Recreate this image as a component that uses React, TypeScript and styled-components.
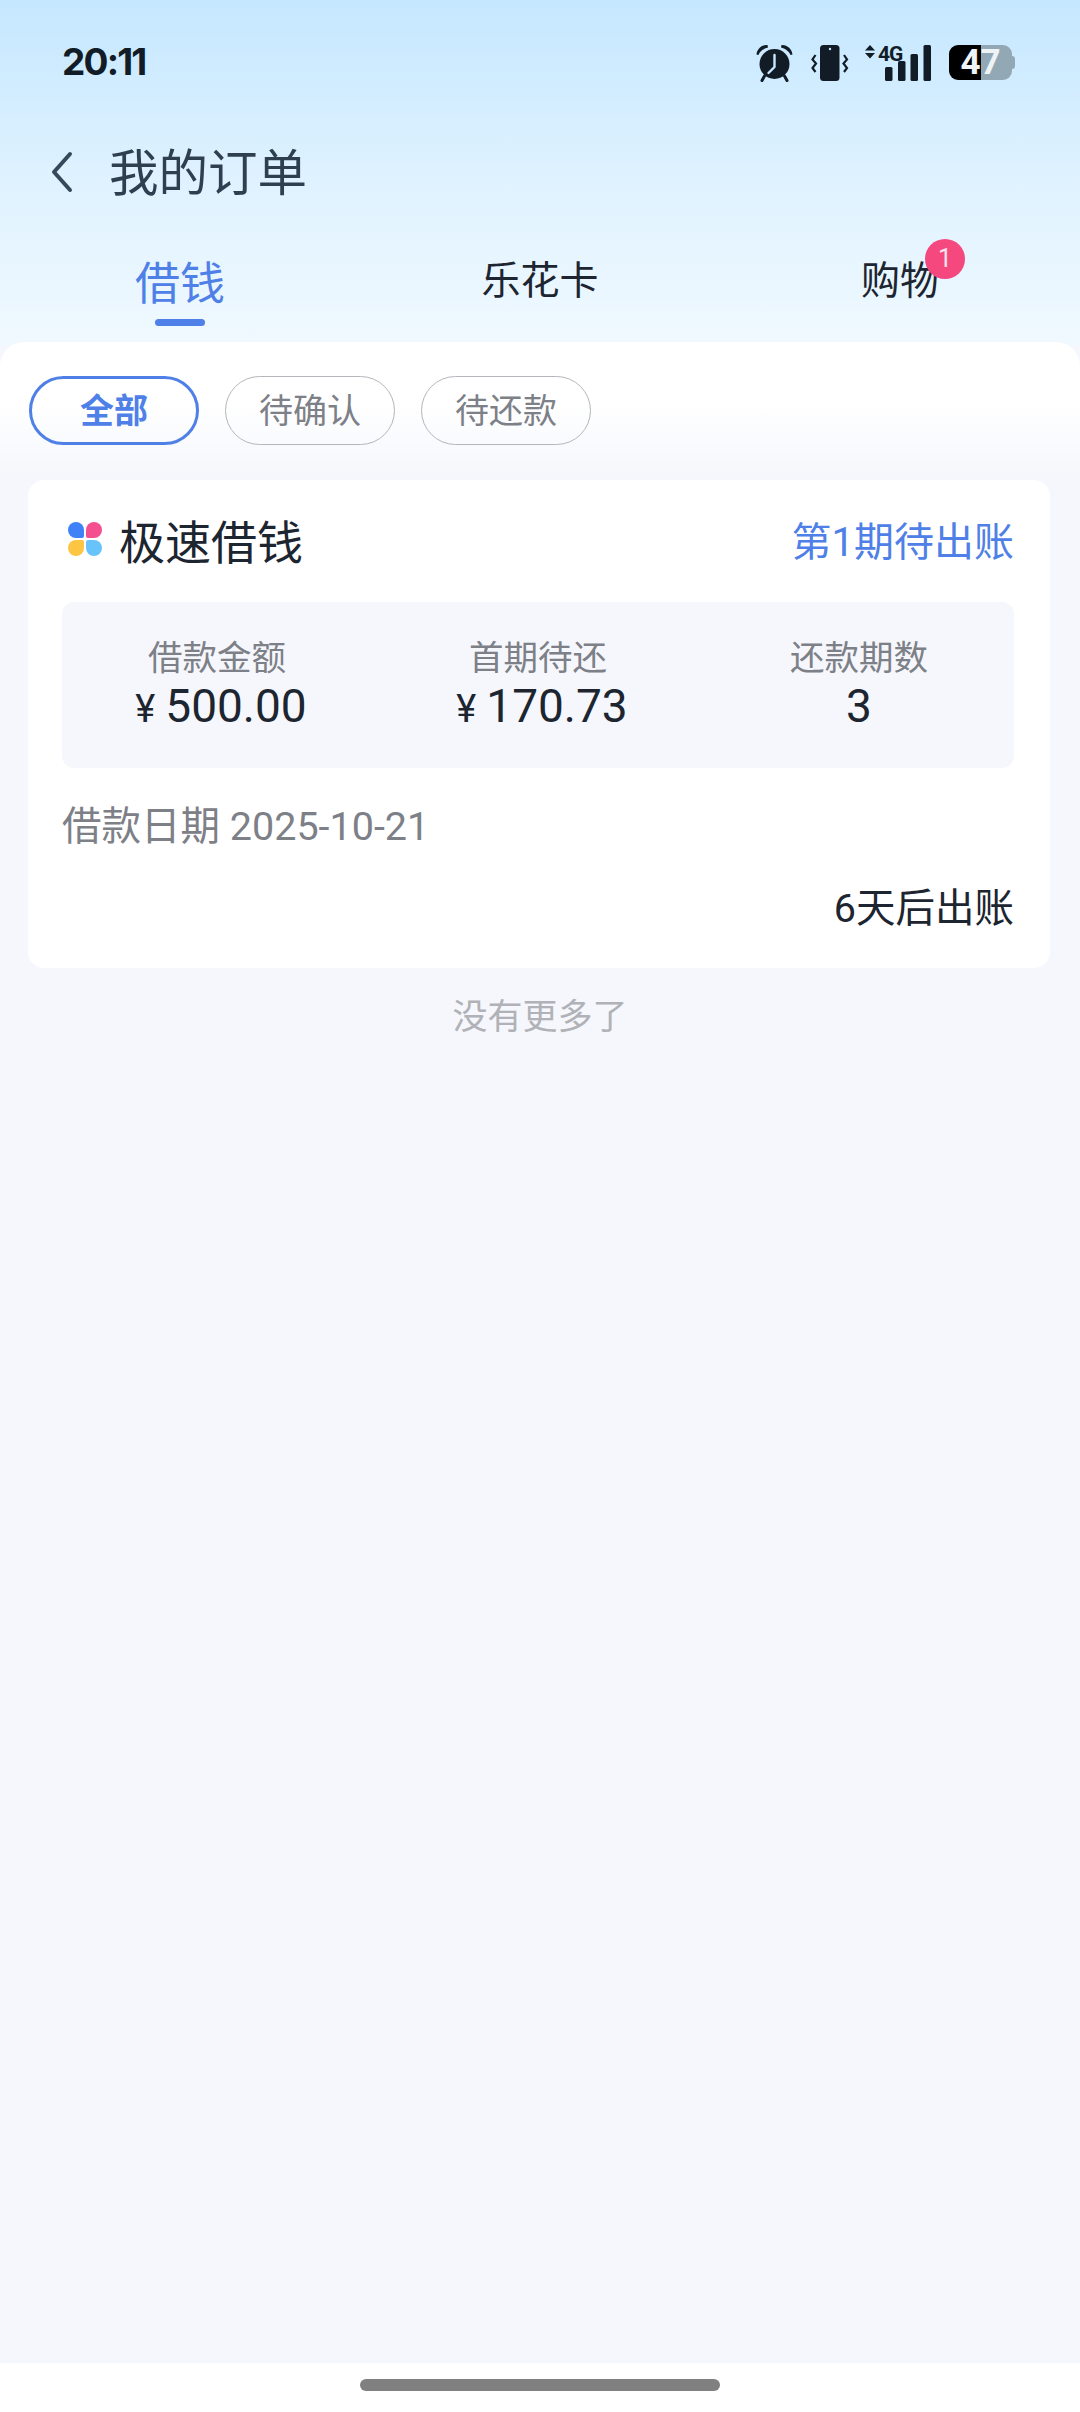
import React from 'react'
import styled, { createGlobalStyle } from 'styled-components'

const GlobalStyle = createGlobalStyle`
  html, body {
    margin: 0;
    padding: 0;
    background: #f5f7fc;
  }
  * {
    box-sizing: border-box;
  }
`

const FONT = `Roboto, "Noto Sans CJK SC", sans-serif`

const Page = styled.div`
  width: 1080px;
  height: 2412px;
  display: flex;
  flex-direction: column;
  overflow: hidden;
  font-family: ${FONT};
  background: linear-gradient(180deg, #c5e7ff 0, #dff2ff 180px, #f0f9ff 345px, #f5f7fc 346px);
`

const StatusBar = styled.div`
  height: 122px;
  display: flex;
  align-items: center;
  justify-content: space-between;
  padding: 0 68px 0 62px;
`

const Time = styled.span`
  font-family: Inter, sans-serif;
  font-size: 37px;
  font-weight: 700;
  letter-spacing: -1.8px;
  color: #111c26;
`

const StatusIcons = styled.div`
  display: flex;
  align-items: center;
  padding-top: 3px;
`

const Battery = styled.div`
  position: relative;
  width: 63px;
  height: 35px;
  margin-left: 17px;
  border-radius: 9px;
  background: linear-gradient(90deg, #000 51%, #93a8b5 51%);
  display: flex;
  align-items: center;
  justify-content: center;
  font-size: 35px;
  font-weight: 700;
  color: #eef3f6;
  &::after {
    content: '';
    position: absolute;
    right: -3px;
    top: 11px;
    width: 3px;
    height: 13px;
    border-radius: 0 3px 3px 0;
    background: #93a8b5;
  }
`

const TitleBar = styled.div`
  height: 100px;
  display: flex;
  align-items: center;
  padding-left: 50px;
`

const PageTitle = styled.h1`
  margin: 3px 0 0 35px;
  font-size: 49.5px;
  font-weight: 400;
  line-height: 60px;
  color: #2e3f4f;
`

const Tabs = styled.div`
  height: 120px;
  display: grid;
  grid-template-columns: repeat(3, 360px);
`

const Tab = styled.div<{ $active?: boolean }>`
  position: relative;
  display: flex;
  flex-direction: column;
  align-items: center;
  padding-top: ${(p) => (p.$active ? '33px' : '35px')};
  font-size: ${(p) => (p.$active ? '45px' : '39px')};
  line-height: ${(p) => (p.$active ? '60px' : '48px')};
  color: ${(p) => (p.$active ? '#4f80e8' : '#1c2530')};
`

const TabLabel = styled.span`
  position: relative;
`

const Underline = styled.span`
  width: 50px;
  height: 7px;
  margin-top: 4px;
  border-radius: 4px;
  background: #4f80e8;
`

const Badge = styled.span`
  position: absolute;
  top: -18px;
  right: -26px;
  width: 40px;
  height: 40px;
  border-radius: 50%;
  background: #f4487f;
  color: #fde3ec;
  font-size: 25px;
  line-height: 40px;
  text-align: center;
`

const Panel = styled.div`
  flex: 1;
  display: flex;
  flex-direction: column;
  border-radius: 24px 24px 0 0;
  padding-top: 34px;
  background: linear-gradient(180deg, #fff 0, #fff 60px, #f5f7fc 135px);
`

const Chips = styled.div`
  display: flex;
  gap: 26px;
  padding-left: 29px;
  margin-bottom: 35px;
`

const Chip = styled.div<{ $active?: boolean }>`
  width: 170px;
  height: 69px;
  padding-bottom: 5px;
  border-radius: 35px;
  display: flex;
  align-items: center;
  justify-content: center;
  font-size: 34px;
  font-weight: ${(p) => (p.$active ? 700 : 400)};
  color: ${(p) => (p.$active ? '#4f80e8' : '#7d8087')};
  border: ${(p) => (p.$active ? '3px solid #4f80e8' : '1px solid #b4b6bb')};
`

const Card = styled.div`
  margin: 0 30px 0 28px;
  padding: 0 36px 36px 34px;
  border-radius: 16px;
  background: #fff;
`

const CardHeader = styled.div`
  height: 122px;
  padding: 0 0 5px 6px;
  display: flex;
  align-items: center;
  justify-content: space-between;
`

const Product = styled.div`
  display: flex;
  align-items: center;
  gap: 17px;
  font-size: 46px;
  color: #1c2530;
`

const Status = styled.span`
  font-size: 40px;
  color: #4f80e8;
`

const InfoBox = styled.div`
  height: 166px;
  display: grid;
  grid-template-columns: 310px 332px 310px;
  padding-top: 33px;
  border-radius: 12px;
  background: #f5f7fc;
`

const InfoCol = styled.div`
  display: flex;
  flex-direction: column;
  align-items: center;
`

const InfoLabel = styled.span`
  font-size: 34.5px;
  line-height: 46px;
  color: #7d8087;
`

const InfoValue = styled.span`
  font-size: 46px;
  line-height: 50px;
  color: #1c2530;
`

const Yen = styled.span`
  font-size: 38px;
  margin: 0 10px 0 8px;
`

const DateRow = styled.div`
  margin-top: 36px;
  font-size: 39.5px;
  line-height: 46px;
  color: #7d8087;
`

const DueRow = styled.div`
  margin-top: 36px;
  font-size: 39.5px;
  line-height: 46px;
  text-align: right;
  color: #1c2530;
`

const NoMore = styled.div`
  height: 96px;
  padding-bottom: 5px;
  display: flex;
  align-items: center;
  justify-content: center;
  font-size: 35px;
  color: #b0b2b8;
`

const Spacer = styled.div`
  flex: 1;
`

const NavBar = styled.div`
  height: 49px;
  display: flex;
  justify-content: center;
  padding-top: 16px;
  background: #fff;
`

const HomeHandle = styled.div`
  width: 360px;
  height: 12px;
  border-radius: 6px;
  background: #808080;
`

const AlarmIcon = () => (
  <svg width="40" height="40" viewBox="0 0 40 40">
    <circle cx="19.5" cy="21" r="15" fill="#111c26" />
    <path d="M1.5 11.5 C2 6 7 1.5 12.5 2 L13 4.5 C9 5.5 5 8 3.5 12 Z" fill="#111c26" />
    <path d="M37.5 11.5 C37 6 32 1.5 26.5 2 L26 4.5 C30 5.5 34 8 35.5 12 Z" fill="#111c26" />
    <path d="M9.5 33 L7 37.5 M29.5 33 L32 37.5" stroke="#111c26" strokeWidth="3" strokeLinecap="round" />
    <path d="M19.5 12 V24 L13.5 30" fill="none" stroke="#c8e8fe" strokeWidth="2.4" strokeLinecap="round" strokeLinejoin="round" />
  </svg>
)

const VibrateIcon = () => (
  <svg width="38" height="38" viewBox="0 0 38 38" style={{ marginLeft: 16 }}>
    <rect x="9" y="1" width="19.5" height="36" rx="3.5" fill="#111c26" />
    <circle cx="19" cy="5" r="1.2" fill="#c8e8fe" />
    <path d="M4.5 11 L1.5 15.5 L5 19.5 L1.5 24 L4.5 28" fill="none" stroke="#111c26" strokeWidth="2.2" />
    <path d="M33 11 L36 15.5 L32.5 19.5 L36 24 L33 28" fill="none" stroke="#111c26" strokeWidth="2.2" />
  </svg>
)

const SignalIcon = () => (
  <svg width="68" height="38" viewBox="0 0 68 38" style={{ marginLeft: 15, overflow: 'visible' }}>
    <path d="M1 6.5 L6 1 L11 6.5 Z M1 9 L6 14.5 L11 9 Z" fill="#111c26" />
    <text x="14" y="16.5" fontFamily="Roboto, sans-serif" fontSize="21" fontWeight="700" fill="#111c26" letterSpacing="-1">4G</text>
    <rect x="21" y="23" width="7.5" height="14" rx="1.5" fill="#111c26" />
    <rect x="34" y="17" width="7.5" height="20" rx="1.5" fill="#111c26" />
    <rect x="46.5" y="10" width="7.5" height="27" rx="1.5" fill="#111c26" />
    <rect x="59.5" y="1" width="7.5" height="36" rx="1.5" fill="#111c26" />
  </svg>
)

const BackIcon = () => (
  <svg width="24" height="42" viewBox="0 0 24 42">
    <path d="M20 3 L4 21 L20 39" fill="none" stroke="#34495a" strokeWidth="4" strokeLinecap="round" strokeLinejoin="round" />
  </svg>
)

const ProductLogo = () => (
  <svg width="34" height="34" viewBox="0 0 34 34">
    <path d="M8 0 A8 8 0 0 1 16 8 V14 A2 2 0 0 1 14 16 H8 A8 8 0 0 1 8 0 Z" fill="#3f82f7" />
    <path d="M26 0 A8 8 0 0 1 26 16 H20 A2 2 0 0 1 18 14 V8 A8 8 0 0 1 26 0 Z" fill="#f4508f" />
    <path d="M8 34 A8 8 0 0 1 8 18 H14 A2 2 0 0 1 16 20 V26 A8 8 0 0 1 8 34 Z" fill="#fdc544" />
    <path d="M26 34 A8 8 0 0 0 26 18 H20 A2 2 0 0 0 18 20 V26 A8 8 0 0 0 26 34 Z" fill="#69c3fb" />
  </svg>
)

const infoItems = [
  { label: '借款金额', value: '500.00', yen: true },
  { label: '首期待还', value: '170.73', yen: true },
  { label: '还款期数', value: '3', yen: false },
]

const chips = ['全部', '待确认', '待还款']

const App = () => {
  return (
    <Page>
      <GlobalStyle />
      <StatusBar>
        <Time>20:11</Time>
        <StatusIcons>
          <AlarmIcon />
          <VibrateIcon />
          <SignalIcon />
          <Battery>47</Battery>
        </StatusIcons>
      </StatusBar>

      <TitleBar>
        <BackIcon />
        <PageTitle>我的订单</PageTitle>
      </TitleBar>

      <Tabs>
        <Tab $active>
          <TabLabel>借钱</TabLabel>
          <Underline />
        </Tab>
        <Tab>
          <TabLabel>乐花卡</TabLabel>
        </Tab>
        <Tab>
          <TabLabel>
            购物
            <Badge>1</Badge>
          </TabLabel>
        </Tab>
      </Tabs>

      <Panel>
        <Chips>
          {chips.map((chip, i) => (
            <Chip key={chip} $active={i === 0}>
              {chip}
            </Chip>
          ))}
        </Chips>

        <Card>
          <CardHeader>
            <Product>
              <ProductLogo />
              极速借钱
            </Product>
            <Status>第1期待出账</Status>
          </CardHeader>
          <InfoBox>
            {infoItems.map((item) => (
              <InfoCol key={item.label}>
                <InfoLabel>{item.label}</InfoLabel>
                <InfoValue>
                  {item.yen && <Yen>¥</Yen>}
                  {item.value}
                </InfoValue>
              </InfoCol>
            ))}
          </InfoBox>
          <DateRow>借款日期 2025-10-21</DateRow>
          <DueRow>6天后出账</DueRow>
        </Card>

        <NoMore>没有更多了</NoMore>
        <Spacer />
        <NavBar>
          <HomeHandle />
        </NavBar>
      </Panel>
    </Page>
  )
}

export default App
